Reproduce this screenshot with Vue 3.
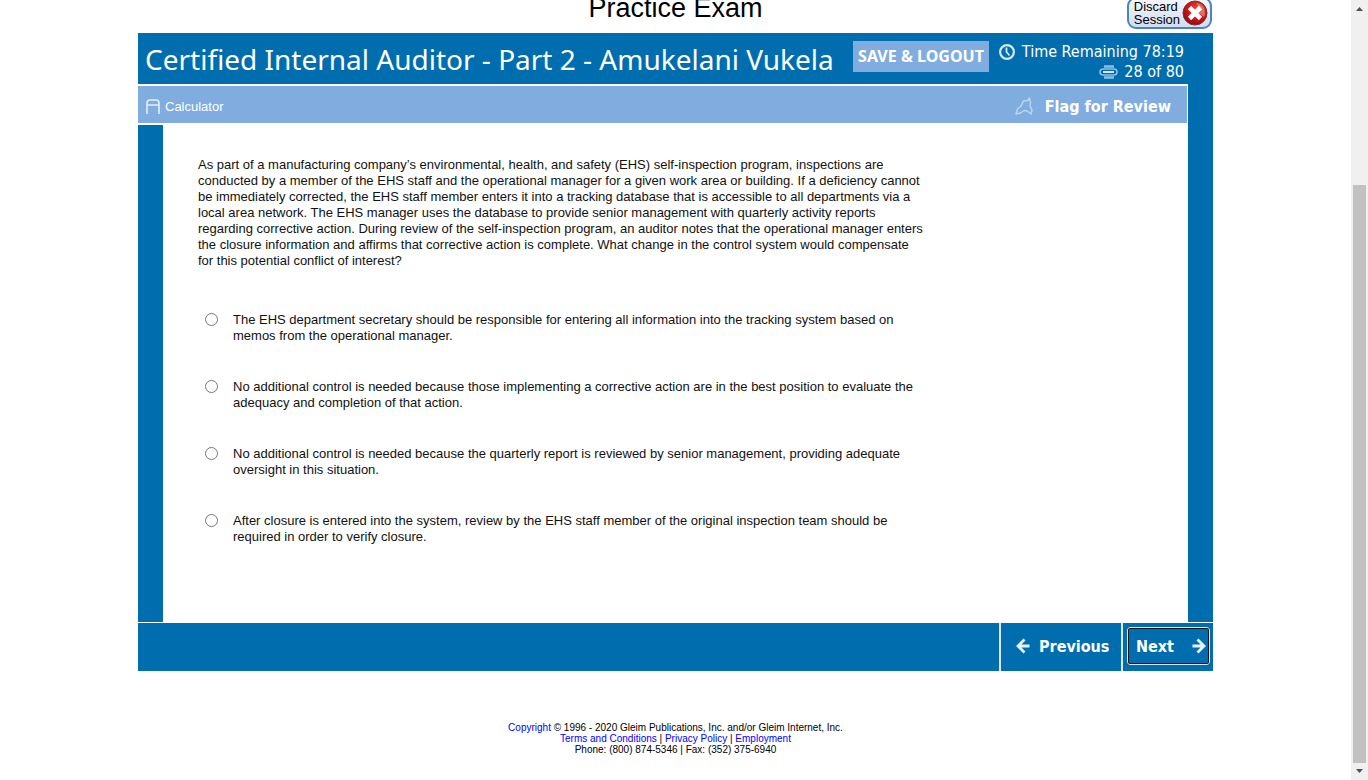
<script setup>
import { ref } from 'vue'

const answer = ref('')
const options = [
  {
    id: 'a',
    text: 'The EHS department secretary should be responsible for entering all information into the tracking system based on memos from the operational manager.'
  },
  {
    id: 'b',
    text: 'No additional control is needed because those implementing a corrective action are in the best position to evaluate the adequacy and completion of that action.'
  },
  {
    id: 'c',
    text: 'No additional control is needed because the quarterly report is reviewed by senior management, providing adequate oversight in this situation.'
  },
  {
    id: 'd',
    text: 'After closure is entered into the system, review by the EHS staff member of the original inspection team should be required in order to verify closure.'
  }
]
</script>

<template>
  <div class="page">
    <main class="content">
      <div class="exam">
        <header class="top">
          <h1>Practice Exam</h1>
          <button class="discard" type="button">
            <span>Discard<br />Session</span>
            <svg width="26" height="26" viewBox="0 0 26 26" aria-hidden="true">
              <defs>
                <radialGradient id="ball" cx="0.6" cy="0.35" r="0.7">
                  <stop offset="0" stop-color="#e8513f" />
                  <stop offset="0.6" stop-color="#d01217" />
                  <stop offset="1" stop-color="#8c0a0c" />
                </radialGradient>
              </defs>
              <circle cx="13" cy="13" r="12" fill="url(#ball)" stroke="#7c3330" />
              <path d="M15 3a10 10 0 0 1 7 14l-5-4z" fill="#f08a78" opacity="0.7" />
              <path d="M7.500 7.500l11 11M18.500 7.500l-11 11" stroke="#fff" stroke-width="4.600" />
            </svg>
          </button>
        </header>

        <div class="frame">
          <div class="main-col">
            <div class="banner">
              <h2>Certified Internal Auditor - Part 2 - Amukelani Vukela</h2>
              <button class="save" type="button">SAVE &amp; LOGOUT</button>
              <div class="status">
                <div class="time">
                  <svg width="18" height="18" viewBox="0 0 18 18" fill="none" aria-hidden="true">
                    <circle cx="9" cy="9" r="6.900" stroke="#d5e8f5" stroke-width="2.200" />
                    <path d="M8.500 4.500V9l3 3.500" stroke="#d5e8f5" stroke-width="1.800" />
                  </svg>
                  <span>Time Remaining 78:19</span>
                </div>
                <div class="count">
                  <svg width="19" height="14" viewBox="0 0 19 14" fill="none" aria-hidden="true">
                    <path d="M5 1.500h10M5 12.500h10" stroke="#8fc0df" stroke-width="2.400" />
                    <rect x="1" y="4" width="17" height="6" rx="3" stroke="#8fc0df" stroke-width="1.600" />
                    <path d="M4 7h11" stroke="#d5e8f5" stroke-width="2" />
                  </svg>
                  <span>28 of 80</span>
                </div>
              </div>
            </div>

            <nav class="tools">
              <button class="calc" type="button">
                <svg width="14" height="15" viewBox="0 0 14 15" fill="none" aria-hidden="true">
                  <path d="M1 15V4q0-3 3-3h6q3 0 3 3v11M1 6h12" stroke="#e4eefa" stroke-width="1.600" />
                </svg>
                <span>Calculator</span>
              </button>
              <button class="flag" type="button">
                <svg width="18" height="18" viewBox="0 0 18 18" fill="none" aria-hidden="true">
                  <path d="M8.500 4L12.500 3.500 14.500 1l1 5-.5 3 2 4-1 4-4-3-3-.5L5.500 16 1 17l1.500-5L6 9z" stroke="#bdd5f1" stroke-width="1.500" stroke-linejoin="round" />
                </svg>
                <span>Flag for Review</span>
              </button>
            </nav>

            <form class="question">
              <p>As part of a manufacturing company’s environmental, health, and safety (EHS) self-inspection program, inspections are conducted by a member of the EHS staff and the operational manager for a given work area or building. If a deficiency cannot be immediately corrected, the EHS staff member enters it into a tracking database that is accessible to all departments via a local area network. The EHS manager uses the database to provide senior management with quarterly activity reports regarding corrective action. During review of the self-inspection program, an auditor notes that the operational manager enters the closure information and affirms that corrective action is complete. What change in the control system would compensate for this potential conflict of interest?</p>
              <div class="options">
                <label v-for="option in options" :key="option.id" class="option">
                  <input v-model="answer" type="radio" name="answer" :value="option.id" />
                  <span>{{ option.text }}</span>
                </label>
              </div>
            </form>
          </div>
          <div class="rail"></div>
        </div>

        <div class="pager">
          <button class="prev" type="button">
            <svg width="14" height="16" viewBox="0 0 14 16" fill="none" aria-hidden="true">
              <path d="M8.500 1.500L2 8l6.500 6.500M2 8h11.500" stroke="#e6f2fa" stroke-width="2.800" />
            </svg>
            <span>Previous</span>
          </button>
          <div class="next-cell">
            <button class="next" type="button">
              <span>Next</span>
              <svg width="14" height="16" viewBox="0 0 14 16" fill="none" aria-hidden="true">
                <path d="M5.500 1.500L12 8l-6.500 6.500M12 8H.5" stroke="#e6f2fa" stroke-width="2.800" />
              </svg>
            </button>
          </div>
        </div>
      </div>

      <footer class="legal">
        <div><a href="#copyright">Copyright</a> © 1996 - 2020 Gleim Publications, Inc. and/or Gleim Internet, Inc.</div>
        <div><a href="#terms">Terms and Conditions</a> | <a href="#privacy">Privacy Policy</a> | <a href="#employment">Employment</a></div>
        <div>Phone: (800) 874-5346 | Fax: (352) 375-6940</div>
      </footer>
    </main>

    <div class="scrollbar" aria-hidden="true">
      <svg width="17" height="17" viewBox="0 0 17 17"><path d="M5 11h7L8.500 7z" fill="#505050" /></svg>
      <div class="track"><div class="thumb"></div></div>
      <svg width="17" height="17" viewBox="0 0 17 17"><path d="M5 6h7l-3.500 4z" fill="#505050" /></svg>
    </div>
  </div>
</template>

<style>
body {
  background: #fff;
}
</style>

<style scoped>
.page {
  display: grid;
  grid-template-columns: minmax(0, 1fr) 17px;
  min-height: 100vh;
  font-family: "Liberation Sans", Arial, sans-serif;
  color: #000;
}
button {
  margin: 0;
  padding: 0;
  border: 0;
  background: none;
  font-family: inherit;
  cursor: pointer;
}
svg {
  display: block;
  flex: none;
}
h1,
h2,
p {
  margin: 0;
  font-weight: 400;
}
.exam {
  max-width: 1075px;
  margin: 0 auto;
}
.top {
  display: grid;
  grid-template-columns: 1fr auto 1fr;
  align-items: end;
  align-content: end;
  height: 33px;
  overflow: hidden;
}
h1 {
  grid-column: 2;
  padding-bottom: 9px;
  font-size: 27px;
  line-height: 32px;
}
.discard {
  justify-self: end;
  display: flex;
  align-items: center;
  gap: 2px;
  margin: 0 1px 4px 0;
  padding: 0 2px 0 5px;
  height: 32px;
  border: 2px solid #4b87b4;
  border-radius: 9px;
  background: linear-gradient(#f4f7fd, #cfdcf4);
  color: #000;
  font-size: 13px;
  line-height: 13px;
  text-align: left;
}
.frame {
  display: grid;
  grid-template-columns: minmax(0, 1fr) 25px;
}
.rail {
  background: #006dae;
}
.banner {
  display: flex;
  align-items: center;
  height: 51px;
  padding-left: 7px;
  background: #006dae;
  color: #fff;
  font-family: "Noto Sans", Tahoma, sans-serif;
}
h2 {
  flex: 1;
  font-size: 28px;
  line-height: 36px;
  white-space: nowrap;
}
.save {
  width: 136px;
  height: 31px;
  margin-bottom: 5px;
  background: #81ace0;
  color: #fff;
  font-size: 16px;
  font-weight: 700;
  white-space: nowrap;
}
.status {
  display: flex;
  flex-direction: column;
  align-items: flex-end;
  width: 199px;
  padding: 6px 4px 0 0;
  box-sizing: border-box;
  font-family: "DejaVu Sans Condensed", Tahoma, sans-serif;
  font-size: 16px;
  line-height: 20px;
  white-space: nowrap;
}
.time,
.count {
  display: flex;
  align-items: center;
  gap: 6px;
}
.tools {
  display: flex;
  justify-content: space-between;
  height: 37px;
  margin: 2px 1px 2px 0;
  padding: 0 16px 0 8px;
  background: #81ace0;
}
.calc,
.flag {
  display: flex;
  align-items: center;
  color: #fff;
}
.calc {
  gap: 5px;
  padding-top: 4px;
  font-size: 13px;
}
.flag {
  gap: 12px;
  padding-top: 3px;
  font-family: "DejaVu Sans Condensed", Tahoma, sans-serif;
  font-size: 16px;
  font-weight: 700;
}
.question {
  min-height: 497px;
  box-sizing: border-box;
  padding: 32px 35px;
  border-left: 25px solid #006dae;
  color: #111;
  font-size: 13px;
  line-height: 16px;
}
.question p {
  max-width: 729px;
}
.options {
  display: grid;
  gap: 35px;
  margin-top: 43px;
  padding-left: 7px;
}
.option {
  display: flex;
  align-items: flex-start;
  gap: 15px;
  max-width: 728px;
}
.option input {
  flex: none;
  width: 13px;
  height: 13px;
  margin: 1px 0 0;
}
.pager {
  display: flex;
  justify-content: flex-end;
  height: 48px;
  margin-top: 1px;
  background: #006dae;
  font-family: "DejaVu Sans Condensed", Tahoma, sans-serif;
}
.pager button {
  display: flex;
  align-items: center;
  color: #fff;
  font-size: 16px;
  font-weight: 700;
}
.pager .prev {
  gap: 9px;
  box-sizing: content-box;
  width: 105px;
  padding: 0 0 2px 15px;
  border-left: 2px solid #d9e9f4;
}
.next-cell {
  display: flex;
  align-items: center;
  padding: 0 3px 2px 4px;
  border-left: 2px solid #d9e9f4;
}
.pager .next {
  justify-content: space-between;
  width: 83px;
  height: 38px;
  padding: 0 2px 0 7px;
  border: 2px solid #101010;
  border-radius: 3px;
  outline: 1px solid #d8e6f0;
  outline-offset: -1px;
}
.legal {
  margin-top: 51px;
  font-size: 10px;
  line-height: 11px;
  text-align: center;
}
.legal a {
  color: #00f;
  text-decoration: none;
}
.scrollbar {
  display: flex;
  flex-direction: column;
  background: #f0f0f0;
}
.track {
  flex: 1;
  display: flex;
  flex-direction: column;
  justify-content: flex-end;
  padding: 0 2px;
}
.thumb {
  height: 77.5%;
  background: #c1c1c1;
}
</style>
